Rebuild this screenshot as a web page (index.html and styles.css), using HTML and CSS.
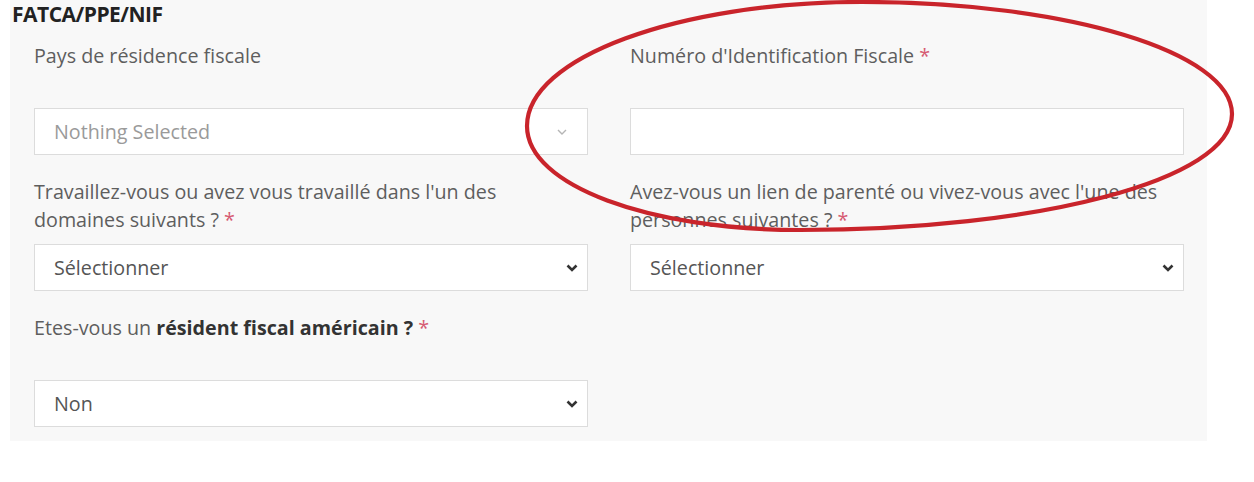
FILE: index.html
```html
<!DOCTYPE html>
<html lang="fr">
<head>
<meta charset="utf-8">
<title>FATCA/PPE/NIF</title>
<link rel="stylesheet" href="styles.css">
</head>
<body>
<section class="panel">
  <h2 class="panel-title">FATCA/PPE/NIF</h2>
  <div class="form-grid">
    <div class="field">
      <label class="field-label">Pays de résidence fiscale</label>
      <div class="control picker">
        <span class="placeholder">Nothing Selected</span>
        <svg class="caret-light" width="12" height="8" viewBox="0 0 12 8"><path d="M2 2 L6 6 L10 2" fill="none" stroke="#b5b5b5" stroke-width="1.4"/></svg>
      </div>
    </div>
    <div class="field">
      <label class="field-label">Numéro d'Identification Fiscale <span class="req">*</span></label>
      <div class="control"></div>
    </div>
    <div class="field">
      <label class="field-label">Travaillez-vous ou avez vous travaillé dans l'un des domaines suivants ? <span class="req">*</span></label>
      <div class="control select">
        <span class="value">Sélectionner</span>
        <svg class="caret" width="12" height="8" viewBox="0 0 12 8"><path d="M1.5 1.5 L6 6 L10.5 1.5" fill="none" stroke="#333" stroke-width="2.6"/></svg>
      </div>
    </div>
    <div class="field">
      <label class="field-label">Avez-vous un lien de parenté ou vivez-vous avec l'une des personnes suivantes ? <span class="req">*</span></label>
      <div class="control select">
        <span class="value">Sélectionner</span>
        <svg class="caret" width="12" height="8" viewBox="0 0 12 8"><path d="M1.5 1.5 L6 6 L10.5 1.5" fill="none" stroke="#333" stroke-width="2.6"/></svg>
      </div>
    </div>
    <div class="field">
      <label class="field-label">Etes-vous un <strong>résident fiscal américain ?</strong> <span class="req">*</span></label>
      <div class="control select">
        <span class="value">Non</span>
        <svg class="caret" width="12" height="8" viewBox="0 0 12 8"><path d="M1.5 1.5 L6 6 L10.5 1.5" fill="none" stroke="#333" stroke-width="2.6"/></svg>
      </div>
    </div>
  </div>
</section>
<svg class="annotation" width="1254" height="482" viewBox="0 0 1254 482">
  <path d="M527 126 C527 58 677 2 862 2 C1066 2 1232 52 1232 114 C1232 180 1038 230 800 230 C650 230 527 186 527 126 Z" fill="none" stroke="#c9242b" stroke-width="4.2"/>
</svg>
</body>
</html>
```

FILE: styles.css
```css
* { box-sizing: border-box; }

html, body {
  margin: 0;
  padding: 0;
  background: #ffffff;
}

body {
  font-family: "Open Sans", "Noto Sans", sans-serif;
  font-size: 19.7px;
  color: #5a5a5a;
  width: 1254px;
  height: 482px;
  overflow: hidden;
}

.panel {
  margin-left: 10px;
  width: 1197px;
  background: #f8f8f8;
  padding: 0 23px 14px 24px;
}

.panel-title {
  margin: 0 0 14px -22px;
  font-size: 21px;
  line-height: 28px;
  font-weight: 700;
  letter-spacing: -0.5px;
  color: #222;
}

.form-grid {
  display: grid;
  grid-template-columns: 554px 554px;
  column-gap: 42px;
  row-gap: 23px;
}

.field {
  display: flex;
  flex-direction: column;
}

.field-label {
  display: block;
  max-width: 530px;
  min-height: 56px;
  margin-bottom: 10px;
  line-height: 28px;
  color: #5e5e5e;
}

.field-label strong {
  font-weight: 700;
  color: #333;
}

.req {
  color: #d65a72;
}

.control {
  height: 47px;
  background: #fff;
  border: 1px solid #dcdcdc;
  display: flex;
  align-items: center;
  justify-content: space-between;
  padding: 0 9px 0 19px;
}

.picker {
  padding-right: 19px;
}

.placeholder {
  color: #9a9a9a;
}

.value {
  color: #555;
}

.caret-light, .caret {
  display: block;
  flex: none;
}

.annotation {
  position: absolute;
  left: 0;
  top: 0;
  pointer-events: none;
}
```
